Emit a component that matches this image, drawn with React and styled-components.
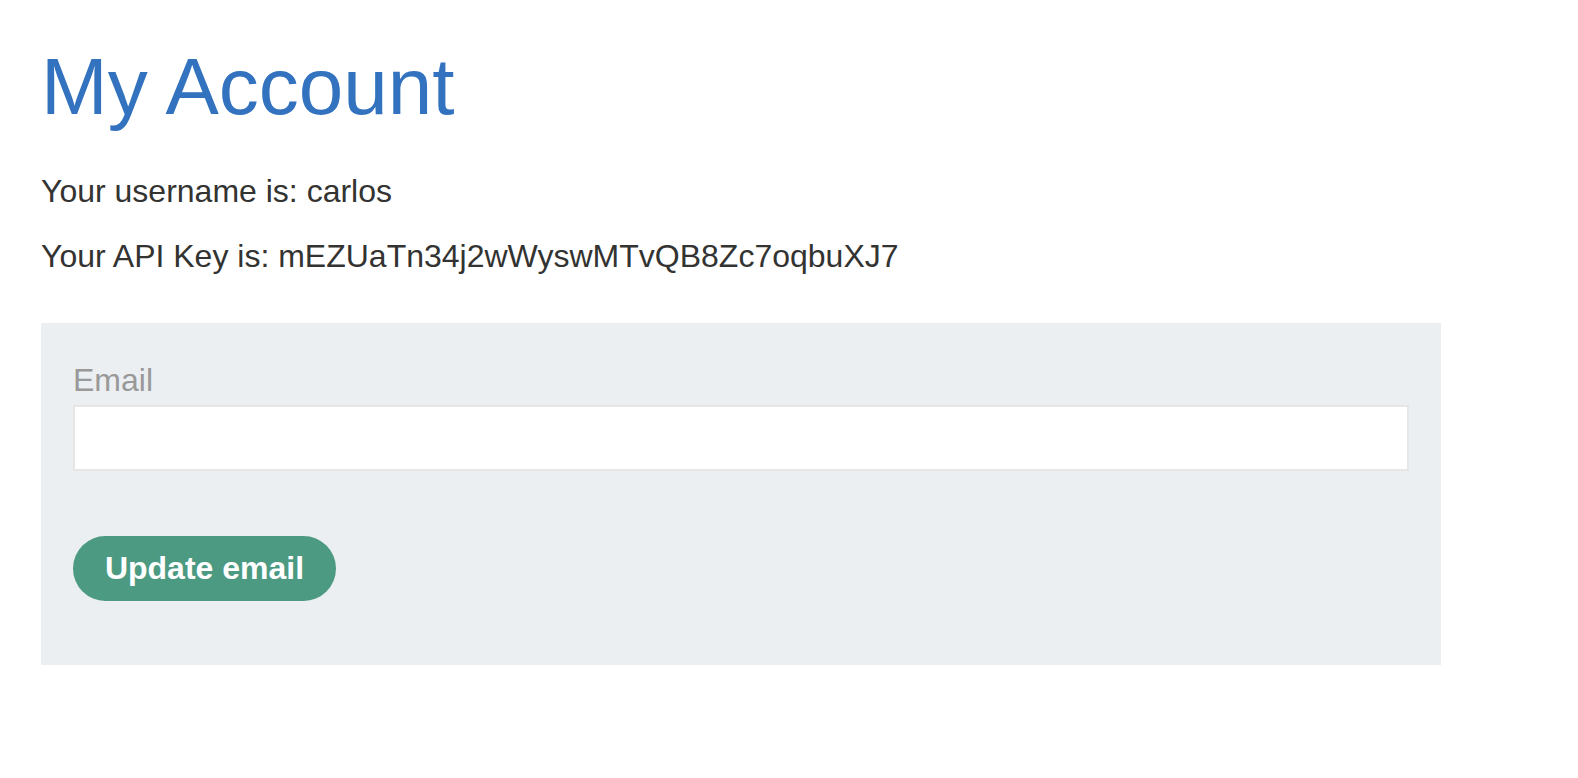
import styled, { createGlobalStyle } from "styled-components";

const GlobalStyle = createGlobalStyle`
  body {
    margin: 0;
    background: #fff;
    font-family: "Liberation Sans", Arial, sans-serif;
    color: #333332;
  }
`;

const App = () => {
  return (
    <Page>
      <GlobalStyle />
      <Title>My Account</Title>
      <Info>Your username is: carlos</Info>
      <Info $gap={33}>Your API Key is: mEZUaTn34j2wWyswMTvQB8Zc7oqbuXJ7</Info>
      <EmailForm onSubmit={(e) => e.preventDefault()}>
        <Label htmlFor="email">Email</Label>
        <Input id="email" name="email" type="email" />
        <Button type="submit">Update email</Button>
      </EmailForm>
    </Page>
  );
};

export default App;

const Page = styled.div`
  padding: 47px 0 0 41px;
  display: flex;
  flex-direction: column;
  align-items: flex-start;
`;

const Title = styled.h1`
  margin: 0;
  font-size: 80px;
  line-height: 1;
  font-weight: normal;
  color: #3272be;
`;

const Info = styled.p`
  margin: ${(props) => props.$gap || 48}px 0 0 0;
  font-size: 32px;
  line-height: 1;
`;

const EmailForm = styled.form`
  margin-top: 51px;
  width: 1400px;
  box-sizing: border-box;
  padding: 41px 32px 64px 32px;
  background: #ebeff2;
  display: flex;
  flex-direction: column;
  align-items: flex-start;
`;

const Label = styled.label`
  font-size: 32px;
  line-height: 1;
  color: #999;
`;

const Input = styled.input`
  margin-top: 9px;
  width: 100%;
  height: 66px;
  box-sizing: border-box;
  border: 2px solid #e6e6e6;
  background: #fff;
  font-size: 28px;
  outline: none;
`;

const Button = styled.button`
  margin-top: 65px;
  width: 263px;
  height: 65px;
  border: none;
  border-radius: 33px;
  background: #4c9a82;
  color: #fff;
  font-family: "Liberation Sans", Arial, sans-serif;
  font-size: 32px;
  font-weight: bold;
  cursor: pointer;
`;
